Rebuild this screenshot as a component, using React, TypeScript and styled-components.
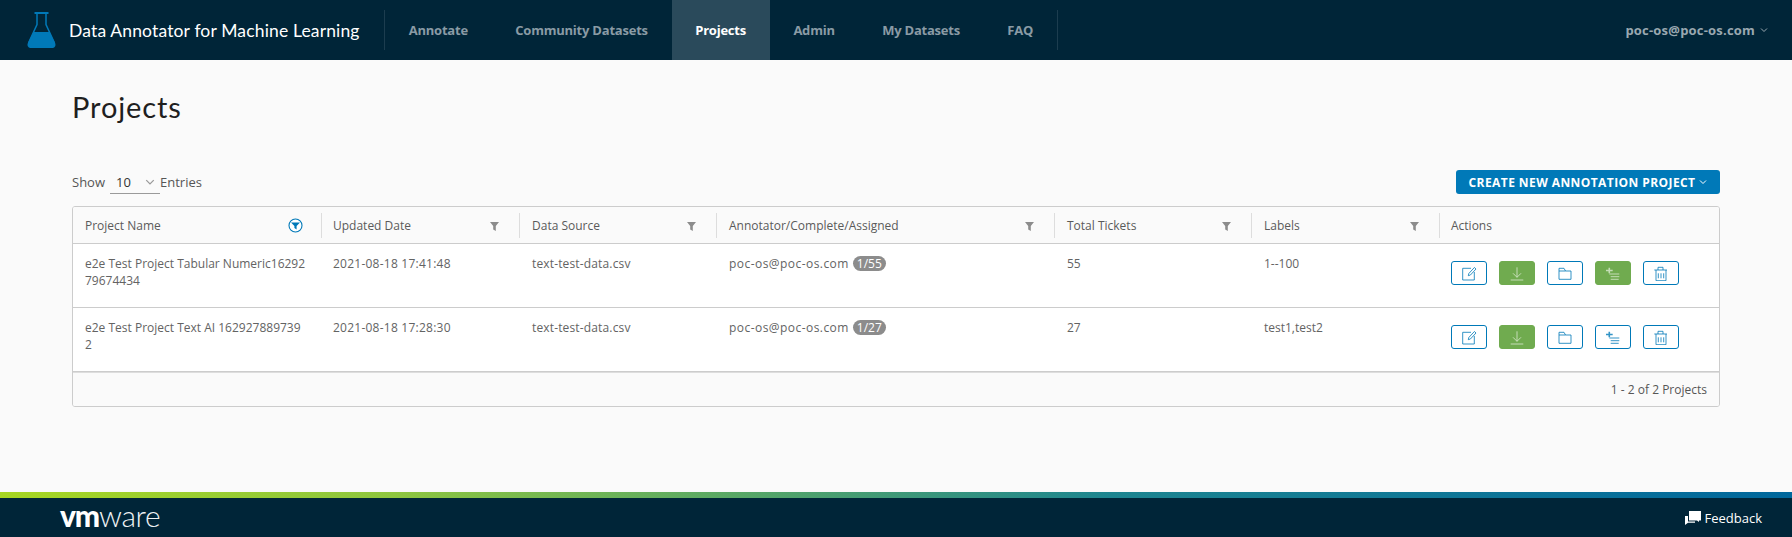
import React from "react";
import styled, { createGlobalStyle } from "styled-components";

const Global = createGlobalStyle`
  html, body { margin: 0; padding: 0; height: 100%; background: #fafafa; }
  #root { height: 100%; }
  * { box-sizing: border-box; }
`;
const Page = styled.div`
  height: 537px; display: flex; flex-direction: column; overflow: hidden;
  font-family: "Open Sans", "Noto Sans", sans-serif; color: #565656; background: #fafafa;
`;
const Header = styled.header`
  height: 60px; flex: none; background: #002538; display: flex; align-items: center;
`;
const Brand = styled.div`
  width: 384px; flex: none; display: flex; align-items: center; gap: 13px; padding-left: 27px;
  color: #fff; font: 400 17.5px "Lato", sans-serif; letter-spacing: .15px; white-space: nowrap;
`;
const Nav = styled.nav`
  display: flex; height: 60px; align-items: stretch;
  &::before, &::after { content: ""; width: 1px; background: #1c3d4f; margin: 10px 0; flex: none; }
`;
const NavItem = styled.a<{ $active?: boolean }>`
  display: flex; align-items: center; padding: 0 23.7px;
  font-size: 13px; font-weight: 700; letter-spacing: -.22px;
  color: ${p => (p.$active ? "#fff" : "#8a9ba5")};
  background: ${p => (p.$active ? "#2a4a5b" : "transparent")};
`;
const User = styled.div`
  margin-left: auto; padding-right: 24px; display: flex; align-items: center; gap: 5px;
  font-size: 13px; font-weight: 700; color: #9aa8b0; letter-spacing: .2px;
`;
const Main = styled.main`
  flex: 1; padding: 0 72px;
`;
const Title = styled.h1`
  margin: 29px 0 0; font: 400 29px/36px "Lato", sans-serif; color: #1f1f1f; letter-spacing: .9px;
`;
const Toolbar = styled.div`
  display: flex; align-items: center; justify-content: space-between; margin-top: 45px; height: 24px;
`;
const ShowRow = styled.div`
  display: flex; align-items: center; font-size: 13px; color: #565656;
`;
const SelectBox = styled.div`
  width: 50px; height: 23px; margin: 1px 0 0 5px; border-bottom: 1px solid #9a9a9a;
  display: flex; align-items: center; justify-content: space-between; padding: 0 5px 0 6px; color: #333;
`;
const CreateBtn = styled.button`
  width: 264px; height: 24px; border: 0; border-radius: 3px; background: #0079b8; color: #fff;
  font: 700 12px "Open Sans", sans-serif; letter-spacing: .42px; display: flex; align-items: center;
  justify-content: center; gap: 4px; padding: 0;
`;
const Card = styled.div`
  margin-top: 12px; height: 201px; background: #fff; border: 1px solid #ccc; border-radius: 3px;
  display: flex; flex-direction: column; overflow: hidden;
`;
const cols = "248px 198px 197px 338px 197px 188px 1fr";
const HeadRow = styled.div`
  height: 37px; display: grid; grid-template-columns: ${cols}; align-items: center;
  background: #fafafa; border-bottom: 1px solid #ccc; flex: none;
`;
const HeadCell = styled.div<{ $first?: boolean }>`
  height: 25px; display: flex; align-items: center; justify-content: space-between;
  padding: 0 ${p => (p.$first ? "18px" : "20px")} 0 ${p => (p.$first ? "12px" : "11px")};
  border-left: ${p => (p.$first ? "0" : "1px solid #ddd")};
  font-size: 12px; font-weight: 500; color: #5a5a5a;
  &:nth-child(n+3):not(:last-child) { padding-left: 12px; }
`;
const Row = styled.div`
  height: 64px; display: grid; grid-template-columns: ${cols}; flex: none; background: #fff;
  border-bottom: 1px solid #ccc;
`;
const Cell = styled.div<{ $track?: number }>`
  padding: 11px 15px 0 12px; font-size: 12px; line-height: 17px; color: #636363; word-break: break-all;
  letter-spacing: ${p => p.$track ?? 0}px;
  &:nth-child(n+3) { padding-left: 13px; }
`;
const Badge = styled.span`
  display: inline-block; height: 15px; line-height: 15px; padding: 0 4px; margin-left: 4px;
  background: #8c8c8c; color: #fff; border-radius: 8px; font-size: 12px; letter-spacing: 0;
`;
const Actions = styled.div`
  padding: 17px 0 0 12px; display: flex; gap: 12px;
`;
const ActionBtn = styled.button<{ $green?: boolean }>`
  width: 36px; height: 24px; padding: 0; border-radius: 3px;
  display: flex; align-items: center; justify-content: center;
  border: 1px solid ${p => (p.$green ? "#70ab4f" : "#0079b8")};
  background: ${p => (p.$green ? "#70ab4f" : "#fff")};
  color: ${p => (p.$green ? "#d9ead0" : "#0079b8")};
`;
const CardFooter = styled.div`
  flex: 1; background: #fafafa; border-top: 1px solid #ddd; display: flex; align-items: center;
  justify-content: flex-end; padding: 0 12px; font-size: 12px; color: #565656;
`;
const Stripe = styled.div`
  height: 6px; flex: none; background: linear-gradient(90deg, #a6d622 0%, #8ec63f 22%, #1d8590 62%, #00679c 100%);
`;
const Footer = styled.footer`
  height: 39px; flex: none; background: #002538; display: flex; align-items: center; justify-content: space-between;
  padding: 0 30px 0 60px; color: #fff;
`;
const Logo = styled.div`
  font: 400 30px/28px "Lato", sans-serif; letter-spacing: -.3px; color: #eef2f4; margin-top: -6px;
  b { font-weight: 900; letter-spacing: -1.2px; color: #fff; }
  span { font-weight: 300; }
`;
const Feedback = styled.div`
  display: flex; align-items: center; gap: 4px; font-size: 13px; color: #fff;
`;

const Flask = () => (
  <svg width="29" height="36" viewBox="0 0 29 36" fill="none" style={{ flex: "none" }}>
    <path d="M7.5 1h14" stroke="#0079b8" strokeWidth="2" />
    <path d="M10 1v11.5L1.5 31M19 1v11.5L27.5 31" stroke="#0079b8" strokeWidth="1.5" />
    <path d="M6.5 20h16l5.8 11.5c.7 2.2-.6 4.5-3 4.5H3.7c-2.4 0-3.7-2.3-3-4.5z" fill="#0079b8" />
  </svg>
);
const Chevron = ({ c = "#fff", s = 8 }: { c?: string; s?: number }) => (
  <svg width={s} height={s} viewBox="0 0 8 8" fill="none"><path d="M1 2.5l3 3 3-3" stroke={c} strokeWidth="1" /></svg>
);
const Funnel = () => (
  <svg width="9" height="9" viewBox="0 0 9 9" style={{ marginTop: 3 }}><path d="M0 0h9L5.8 4v5L3.2 7.6V4z" fill="#8c8c8c" /></svg>
);
const FunnelOn = () => (
  <svg width="15" height="15" viewBox="0 0 15 15">
    <circle cx="7.5" cy="7.5" r="6.5" fill="#fff" stroke="#0079b8" strokeWidth="1.1" />
    <path d="M3 4.5h9L8.6 8v3.6L6.4 10V8z" fill="#0079b8" />
  </svg>
);
const I = ({ children }: { children: React.ReactNode }) => (
  <svg width="16" height="16" viewBox="0 0 16 16" fill="none" stroke="currentColor" strokeWidth="1" strokeOpacity=".8">{children}</svg>
);
const Edit = () => <I><path d="M10 3.3H1.7V15h11.6V7" /><path d="M7.3 10.7l.5-2.2 5.6-6 1.6 1.5-5.6 6z" /></I>;
const Down = () => <I><path d="M8 2.3v10M4 8.3l4 4 4-4M1.7 15h12.6" /></I>;
const Folder = () => <I><path d="M2 14.3V3.3h5l1.5 2.7H14v8.3z" /><path d="M2 6h6.5" /></I>;
const AddList = () => (
  <I>
    <path d="M1 5.5h6.7M4.3 2.7v5.6" strokeWidth="1.6" />
    <path d="M4.3 9h10M5.7 11.7h8.6M5.7 14.3h8" />
  </I>
);
const Trash = () => <I><path d="M1.3 5h12.7M5 5V2.3h5V5M3 5v10.7h10V5M5.3 8.3v5M8 8.3v5M10.7 8.3v5" /></I>;
const Bubble = () => (
  <svg width="16" height="14" viewBox="0 0 16 14" fill="#fff">
    <path d="M4 0h12v9.5H14V11l-2-1.5H4z" />
    <path d="M0 5h3v5.5h7v1.2H3L0 14z" />
  </svg>
);

const rows = [
  { name: "e2e Test Project Tabular Numeric1629279674434", date: "2021-08-18 17:41:48", badge: "1/55", total: "55", labels: "1--100", green: true },
  { name: "e2e Test Project Text AI 1629278897392", date: "2021-08-18 17:28:30", badge: "1/27", total: "27", labels: "test1,test2", green: false },
];
const heads = ["Updated Date", "Data Source", "Annotator/Complete/Assigned", "Total Tickets", "Labels"];

export default function App() {
  return (
    <Page>
      <Global />
      <Header>
        <Brand><Flask />Data Annotator for Machine Learning</Brand>
        <Nav>
          <NavItem>Annotate</NavItem>
          <NavItem>Community Datasets</NavItem>
          <NavItem $active>Projects</NavItem>
          <NavItem>Admin</NavItem>
          <NavItem>My Datasets</NavItem>
          <NavItem>FAQ</NavItem>
        </Nav>
        <User>poc-os@poc-os.com<Chevron c="#9aa8b0" /></User>
      </Header>
      <Main>
        <Title>Projects</Title>
        <Toolbar>
          <ShowRow>Show<SelectBox>10<Chevron c="#999" s={10} /></SelectBox>Entries</ShowRow>
          <CreateBtn>CREATE NEW ANNOTATION PROJECT<Chevron /></CreateBtn>
        </Toolbar>
        <Card>
          <HeadRow>
            <HeadCell $first>Project Name<FunnelOn /></HeadCell>
            {heads.map(h => <HeadCell key={h}>{h}<Funnel /></HeadCell>)}
            <HeadCell>Actions</HeadCell>
          </HeadRow>
          {rows.map(r => (
            <Row key={r.name}>
              <Cell>{r.name}</Cell>
              <Cell $track={0.24}>{r.date}</Cell>
              <Cell $track={0.15}>text-test-data.csv</Cell>
              <Cell $track={0.45}>poc-os@poc-os.com<Badge>{r.badge}</Badge></Cell>
              <Cell>{r.total}</Cell>
              <Cell>{r.labels}</Cell>
              <Actions>
                <ActionBtn><Edit /></ActionBtn>
                <ActionBtn $green><Down /></ActionBtn>
                <ActionBtn><Folder /></ActionBtn>
                <ActionBtn $green={r.green}><AddList /></ActionBtn>
                <ActionBtn><Trash /></ActionBtn>
              </Actions>
            </Row>
          ))}
          <CardFooter>1 - 2 of 2 Projects</CardFooter>
        </Card>
      </Main>
      <Stripe />
      <Footer>
        <Logo><b>vm</b><span>ware</span></Logo>
        <Feedback><Bubble />Feedback</Feedback>
      </Footer>
    </Page>
  );
}
